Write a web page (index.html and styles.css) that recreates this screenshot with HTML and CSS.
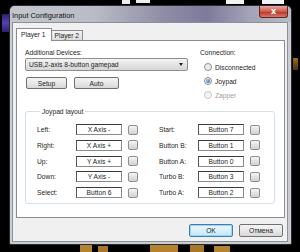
FILE: index.html
```html
<!DOCTYPE html>
<html lang="en">
<head>
    <meta charset="UTF-8">
    <title>Input Configuration</title>
    <link rel="stylesheet" href="styles.css">
</head>
<body>
    <div class="desk">
        <!-- bits of the game screen that show round the dialog -->
        <div class="px px-top1"></div>
        <div class="px px-top2"></div>
        <div class="px px-top3"></div>
        <div class="px px-top4"></div>
        <div class="px px-bot1"></div>
        <div class="px px-bot2"></div>
        <div class="px px-bot3"></div>
        <div class="px px-bot4"></div>
        <div class="px px-bot5"></div>
        <div class="px px-right"></div>
        <div class="bg-glow"></div>

        <div class="window">
            <div class="titlebar">
                <span class="title">Input Configuration</span>
                <button class="close">x</button>
            </div>
            <div class="client">
                <div class="tabs">
                    <div class="tab active">Player 1</div>
                    <div class="tab">Player 2</div>
                </div>
                <div class="panel">
                    <div class="top">
                        <div class="devices">
                            <div class="label">Additional Devices:</div>
                            <div class="select">
                                <span>USB,2-axis 8-button gamepad</span>
                                <span class="arrow"></span>
                            </div>
                            <div class="btn-row">
                                <button class="btn">Setup</button>
                                <button class="btn">Auto</button>
                            </div>
                        </div>
                        <div class="connection">
                            <div class="label">Connection:</div>
                            <div class="radio"><span class="circle"></span>Disconnected</div>
                            <div class="radio checked"><span class="circle"></span>Joypad</div>
                            <div class="radio disabled"><span class="circle"></span>Zapper</div>
                        </div>
                    </div>

                    <fieldset class="layout">
                        <legend>Joypad layout</legend>
                        <div class="cols">
                            <div class="col">
                                <span>Left:</span><span class="field">X Axis -</span><span class="mini"></span>
                                <span>Right:</span><span class="field">X Axis +</span><span class="mini"></span>
                                <span>Up:</span><span class="field">Y Axis +</span><span class="mini"></span>
                                <span>Down:</span><span class="field">Y Axis -</span><span class="mini"></span>
                                <span>Select:</span><span class="field">Button 6</span><span class="mini"></span>
                            </div>
                            <div class="col">
                                <span>Start:</span><span class="field">Button 7</span><span class="mini"></span>
                                <span>Button B:</span><span class="field">Button 1</span><span class="mini"></span>
                                <span>Button A:</span><span class="field">Button 0</span><span class="mini"></span>
                                <span>Turbo B:</span><span class="field">Button 3</span><span class="mini"></span>
                                <span>Turbo A:</span><span class="field">Button 2</span><span class="mini"></span>
                            </div>
                        </div>
                    </fieldset>
                </div>
                <div class="footer">
                    <button class="btn default">OK</button>
                    <button class="btn">Отмена</button>
                </div>
            </div>
        </div>
    </div>
</body>
</html>
```

FILE: styles.css
```css
* {
    margin: 0;
    padding: 0;
    box-sizing: border-box;
}

body {
    background: #000;
    width: 300px;
    height: 252px;
    overflow: hidden;
    font-family: 'Liberation Sans', Arial, sans-serif;
    font-size: 6.7px;
    color: #1e1e1e;
}

.desk {
    position: relative;
    width: 300px;
    height: 252px;
    overflow: hidden;
}

/* game screen behind the dialog */
.px {
    position: absolute;
}

.px-top1 { left: 122px; top: 0; width: 8px; height: 4px; background: #eee; }
.px-top2 { left: 136px; top: 0; width: 14px; height: 3px; background: #eee; }
.px-top3 { left: 226px; top: 0; width: 18px; height: 4px; background: #f2f2f2; }
.px-top4 { left: 262px; top: 0; width: 22px; height: 4px; background: #f2f2f2; }

.px-bot1 { left: 80px; top: 245px; width: 12px; height: 7px; background: #b5822f; }
.px-bot2 { left: 98px; top: 246px; width: 10px; height: 6px; background: #a8772b; }
.px-bot3 { left: 150px; top: 245px; width: 28px; height: 7px; background: #b5822f; }
.px-bot4 { left: 190px; top: 245px; width: 14px; height: 7px; background: #a8772b; }
.px-bot5 { left: 214px; top: 246px; width: 16px; height: 6px; background: #b5822f; }

.px-right { left: 293px; top: 58px; width: 5px; height: 12px; background: linear-gradient(#a06a20, #4a3010); }

.bg-glow {
    position: absolute;
    left: 2px;
    top: 14px;
    width: 7px;
    height: 18px;
    background: linear-gradient(#2c1f6e, #5a3fb0, #2c1f6e);
}

.window {
    position: absolute;
    left: 9px;
    top: 5px;
    width: 283px;
    height: 240px;
    border: 1px solid #2a2c30;
    border-radius: 6px 6px 2px 2px;
    background: #c9cdd2;
    padding: 0 3px 2px 2px;
    display: flex;
    flex-direction: column;
}

.titlebar {
    height: 16px;
    display: flex;
    justify-content: space-between;
    align-items: center;
    margin: 0 -3px 0 -2px;
    padding: 0 3px 0 2px;
    border-radius: 5px 5px 0 0;
    background: linear-gradient(90deg, #c3c7cd 0%, #b9bcc6 30%, #8f8ca6 55%, #7e7a9c 70%, #a3a2b7 85%, #b8bcc4 100%);
}

.title {
    font-size: 7.4px;
    color: #111;
    margin-top: 2px;
}

.close {
    align-self: flex-start;
    width: 29px;
    height: 12px;
    border: 1px solid #5a2a24;
    border-top: none;
    border-radius: 0 0 3px 3px;
    background: linear-gradient(#e6a89e, #d0584a 50%, #b8382a 55%, #d47a6c);
    color: #fff;
    font-family: 'DejaVu Sans', sans-serif;
    font-weight: bold;
    font-size: 8px;
    line-height: 10px;
}

.client {
    height: 220px;
    background: #f0f0f0;
    border: 1px solid #8c9097;
    padding: 5px 2px 0 3px;
    display: flex;
    flex-direction: column;
}

.tabs {
    display: flex;
    height: 12px;
    align-items: flex-end;
}

.tab {
    height: 10px;
    padding: 0 3px;
    line-height: 9px;
    white-space: nowrap;
    border: 1px solid #898c95;
    border-bottom: none;
    background: linear-gradient(#f2f2f2, #dcdcdc);
    margin-left: -1px;
}

.tab.active {
    height: 13px;
    margin-left: 0;
    margin-bottom: -1px;
    background: #fff;
    position: relative;
    z-index: 1;
    line-height: 11px;
    padding: 0 5px 0 4px;
}

.panel {
    height: 178px;
    background: #fff;
    border: 1px solid #898c95;
    padding: 7px 0 0 8px;
}

.top {
    display: flex;
    gap: 12px;
}

.label {
    line-height: 9px;
}

.devices {
    width: 163px;
}

.select {
    margin-top: 1px;
    height: 13px;
    border: 1px solid #8e8f8f;
    border-radius: 2px;
    background: linear-gradient(#f4f4f4, #e4e4e4 50%, #d6d6d6);
    display: flex;
    justify-content: space-between;
    align-items: center;
    padding: 0 4px 0 3px;
}

.arrow {
    width: 0;
    height: 0;
    border-left: 2.5px solid transparent;
    border-right: 2.5px solid transparent;
    border-top: 3px solid #222;
}

.btn-row {
    display: flex;
    gap: 7px;
    margin-top: 6px;
    padding-left: 1px;
}

.btn {
    height: 12px;
    width: 41px;
    border: 1px solid #707070;
    border-radius: 2px;
    background: linear-gradient(#f4f4f4, #e8e8e8 50%, #d8d8d8);
    font-family: 'Liberation Sans', Arial, sans-serif;
    font-size: 6.7px;
    color: #1e1e1e;
}

.btn-row .btn + .btn {
    width: 45px;
}

.connection .radio {
    display: flex;
    align-items: center;
    height: 14px;
    gap: 3px;
    padding-left: 4px;
}

.connection .label + .radio {
    margin-top: 3px;
}

.circle {
    width: 8px;
    height: 8px;
    border-radius: 50%;
    border: 1px solid #8a8a8a;
    background: radial-gradient(circle, #e6e6e6, #f8f8f8);
    display: flex;
    align-items: center;
    justify-content: center;
}

.radio.checked .circle::after {
    content: '';
    width: 4px;
    height: 4px;
    border-radius: 50%;
    background: radial-gradient(circle at 35% 35%, #8fc3ea, #1d5f9a);
}

.radio.disabled {
    color: #a0a0a0;
}

.radio.disabled .circle {
    border-color: #c8c8c8;
    background: #f4f4f4;
}

.layout {
    width: 250px;
    margin-top: 5px;
    border: 1px solid #d5dfe5;
    border-radius: 3px;
    padding: 8px 0 5px 11px;
}

.layout legend {
    padding: 0 2px;
    margin-left: 3px;
    line-height: 9px;
}

.cols {
    display: flex;
    gap: 21px;
}

.col {
    display: grid;
    grid-template-columns: 33px 46px 10px;
    column-gap: 6px;
    row-gap: 4.75px;
    align-items: center;
}

.field {
    height: 11px;
    line-height: 9px;
    text-align: center;
    background: #fff;
    border: 1px solid #8a8a8a;
    border-top-color: #3a3a3a;
    border-left-color: #555;
}

.mini {
    width: 10px;
    height: 10px;
    border: 1px solid #8e8f8f;
    border-radius: 2px;
    background: linear-gradient(#f4f4f4, #e2e2e2 50%, #d2d2d2);
}

.footer {
    display: flex;
    justify-content: flex-end;
    gap: 6px;
    margin-top: 6px;
    padding-right: 2px;
}

.footer .btn {
    width: 44px;
    height: 13px;
}

.footer .btn.default {
    border-color: #3c7fb1;
    box-shadow: inset 0 0 0 1px #9fd3f5;
    background: linear-gradient(#eaf6fd, #d9f0fc 50%, #bee6fd);
}
```
